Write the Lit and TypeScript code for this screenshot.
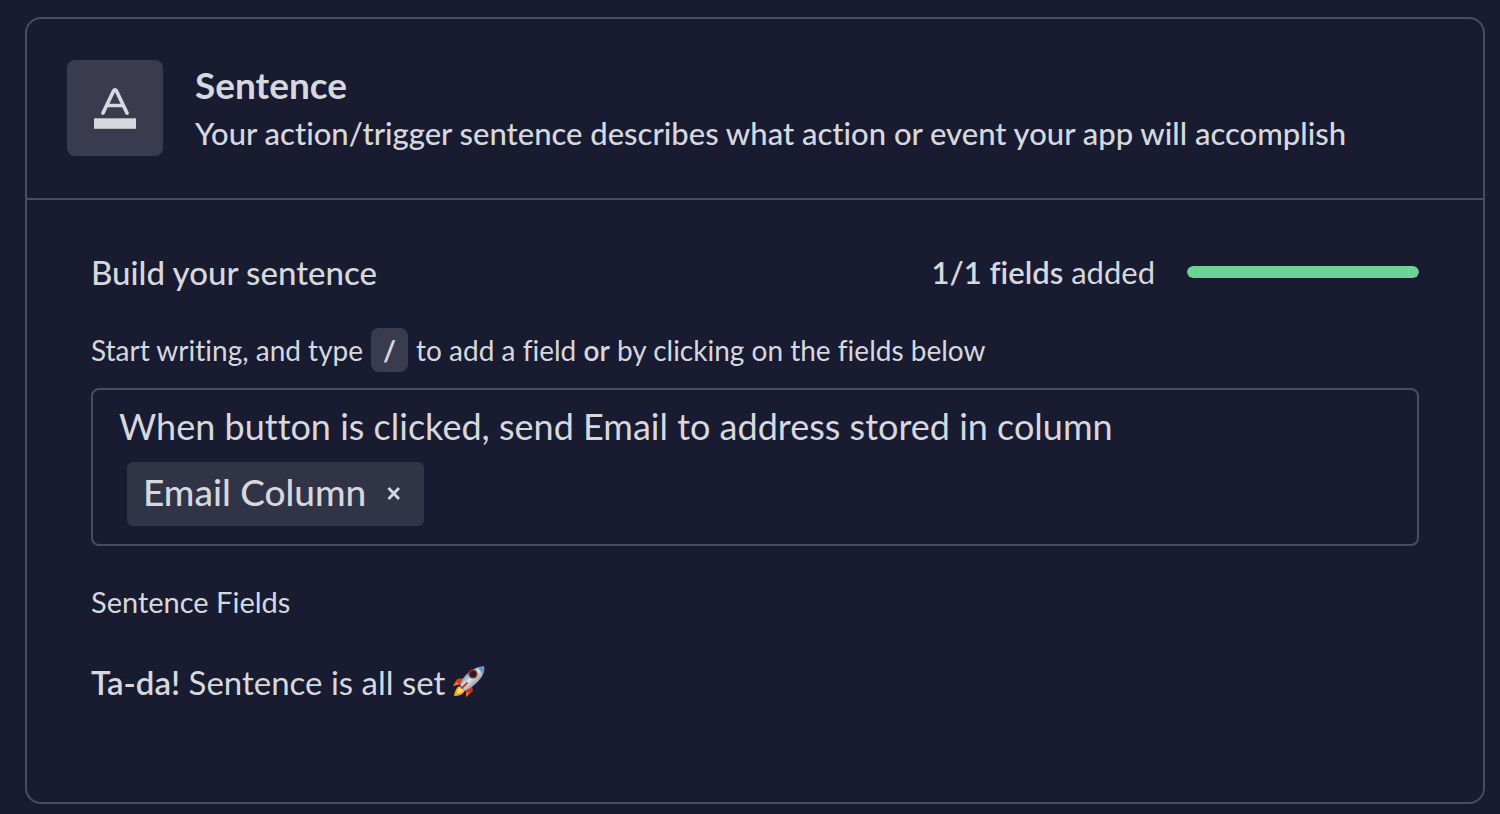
import { LitElement, html, css } from "lit";
import { customElement, state } from "lit/decorators.js";

@customElement("app-root")
export class AppRoot extends LitElement {
  static styles = css`
    :host {
      display: block;
      box-sizing: border-box;
      min-height: 100vh;
      padding: 17px 15px 10px 25px;
      background: #191b31;
      color: #d5d8df;
      font-family: Lato, "Open Sans", sans-serif;
      font-variant-ligatures: none;
    }
    * {
      box-sizing: border-box;
    }
    h1,
    h2,
    h3,
    p {
      margin: 0;
      font-weight: 400;
    }
    .card {
      min-height: calc(100vh - 27px);
      border: 2px solid #4b4c63;
      border-radius: 16px;
    }
    .header {
      display: flex;
      align-items: center;
      gap: 32px;
      padding: 40px 40px 41px;
      border-bottom: 2px solid #4b4c63;
    }
    .tile {
      flex: none;
      width: 96px;
      height: 96px;
      border-radius: 8px;
      background: #3a3b4f;
    }
    .tile svg {
      display: block;
    }
    .title {
      padding-top: 2px;
      font-size: 37px;
      line-height: 48px;
      font-weight: 700;
    }
    .subtitle {
      font-size: 31px;
      line-height: 48px;
      font-weight: 500;
    }
    .body {
      padding: 48px 64px;
    }
    .row {
      display: flex;
      justify-content: space-between;
      align-items: center;
      line-height: 48px;
    }
    .heading {
      font-size: 33px;
      font-weight: 500;
    }
    .status {
      display: flex;
      align-items: center;
      gap: 32px;
      font-size: 31px;
    }
    strong {
      font-weight: 600;
    }
    progress {
      appearance: none;
      width: 232px;
      height: 12px;
      border: 0;
      border-radius: 6px;
      overflow: hidden;
      background: #3a3b4f;
    }
    progress::-webkit-progress-bar {
      background: #3a3b4f;
    }
    progress::-webkit-progress-value {
      background: #6cd295;
      border-radius: 6px;
    }
    .hint {
      display: flex;
      align-items: center;
      gap: 8px;
      margin-top: 32px;
      font-size: 28px;
      line-height: 44px;
    }
    kbd {
      padding: 0 12px;
      border-radius: 8px;
      background: #3a3b4f;
      font: inherit;
      font-weight: 700;
    }
    .editor {
      margin-top: 16px;
      padding: 8px 26px 18px;
      border: 2px solid #4b4c63;
      border-radius: 8px;
      font-size: 36px;
    }
    .text {
      display: block;
      width: 100%;
      height: 56px;
      padding: 0;
      border: 0;
      outline: 0;
      background: none;
      color: inherit;
      font: inherit;
      font-variant-ligatures: none;
    }
    .chip {
      display: inline-flex;
      align-items: center;
      gap: 20px;
      height: 64px;
      margin: 8px 8px 0;
      padding: 0 22px 0 16px;
      border-radius: 6px;
      background: #313346;
      font-size: 37px;
      line-height: 60px;
      font-weight: 500;
      vertical-align: top;
    }
    .chip-name {
      padding-bottom: 4px;
    }
    .remove {
      display: flex;
      padding: 0;
      border: 0;
      background: none;
      color: inherit;
    }
    .label {
      margin-top: 36px;
      font-size: 29px;
      line-height: 40px;
    }
    .done {
      display: flex;
      align-items: center;
      gap: 8px;
      margin-top: 36px;
      font-size: 33px;
      line-height: 48px;
    }
  `;

  @state() private sentence =
    "When button is clicked, send Email to address stored in column";

  render() {
    return html`
      <main class="card">
        <header class="header">
          <div class="tile">
            <svg width="96" height="96" viewBox="0 0 96 96" aria-hidden="true">
              <path
                d="M36 53 46.4 31.2Q48 28.4 49.6 31.2L60 53M39.7 45.5H56.3"
                fill="none"
                stroke="#d5d8df"
                stroke-width="3.7"
                stroke-linecap="round"
                stroke-linejoin="round"
              />
              <rect x="27" y="58.3" width="42" height="10.5" fill="#d5d8df" />
            </svg>
          </div>
          <div>
            <h1 class="title">Sentence</h1>
            <p class="subtitle">
              Your action/trigger sentence describes what action or event your
              app will accomplish
            </p>
          </div>
        </header>
        <section class="body">
          <div class="row">
            <h2 class="heading">Build your sentence</h2>
            <div class="status">
              <label for="progress"><strong>1/1 fields</strong> added</label>
              <progress id="progress" value="1" max="1"></progress>
            </div>
          </div>
          <label class="hint" for="sentence">
            <span>Start writing, and type</span><kbd>/</kbd
            ><span
              >to add a field <strong>or</strong> by clicking on the fields
              below</span
            >
          </label>
          <div class="editor">
            <input
              class="text"
              id="sentence"
              type="text"
              spellcheck="false"
              .value=${this.sentence}
            />
            <span class="chip">
              <span class="chip-name">Email Column</span>
              <button class="remove" aria-label="Remove Email Column">
                <svg width="16" height="18" viewBox="0 0 16 18">
                  <path
                    d="M2.5 3 13 14M13 3 2.5 14"
                    stroke="currentColor"
                    stroke-width="2.8"
                  />
                </svg>
              </button>
            </span>
          </div>
          <h3 class="label">Sentence Fields</h3>
          <p class="done">
            <span><strong>Ta-da!</strong> Sentence is all set</span>
            <svg width="32" height="32" viewBox="0 0 32 32" role="img" aria-label="rocket">
              <defs>
                <linearGradient id="hull" x1="0.2" y1="0.2" x2="0.8" y2="0.8">
                  <stop offset="0" stop-color="#4f7fae" />
                  <stop offset="0.45" stop-color="#dce5ec" />
                  <stop offset="1" stop-color="#6f7780" />
                </linearGradient>
              </defs>
              <path d="M11 12 4 13 0 20 8 18Z" fill="#d8401f" />
              <path d="M3 16 0 20 7 18Z" fill="#ef7b2c" />
              <path d="M19 20 20 25 13 31 13 23Z" fill="#c9351d" />
              <path d="M13 26 13 31 17 27Z" fill="#ef6a2c" />
              <path d="M6 20 12 25Q9 30 1 30 2 23 6 20Z" fill="#f3a72d" />
              <path d="M7 21 11 24Q8 28 4 27 4 24 7 21Z" fill="#ffe36b" />
              <path
                d="M7 19Q11 8 20 3.5 26 0 31 0.5 32 6 28 12 22 20 12 25Z"
                fill="url(#hull)"
              />
              <path d="M24 1.7 31 0.5Q32 5 29.5 9 28 4 24 1.7Z" fill="#5b9bd0" />
              <circle cx="20" cy="8" r="4.6" fill="#a82a24" />
              <circle cx="20" cy="8" r="3.1" fill="#1f1f28" />
              <path d="M14 17 9 22" stroke="#c9351d" stroke-width="1.8" stroke-linecap="round" />
            </svg>
          </p>
        </section>
      </main>
    `;
  }
}
